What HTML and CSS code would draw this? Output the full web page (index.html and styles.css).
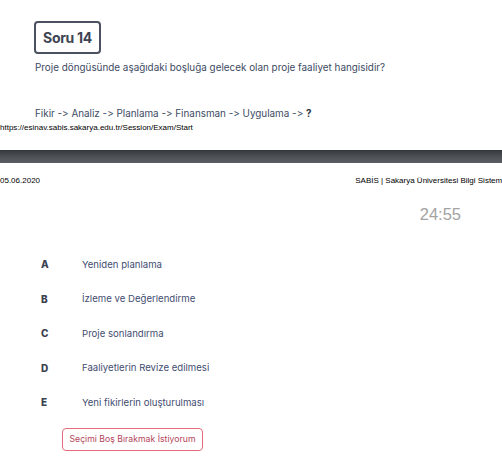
FILE: index.html
```html
<!DOCTYPE html>
<html lang="tr">
<head>
<meta charset="utf-8">
<title>Sınav</title>
<link rel="stylesheet" href="styles.css">
</head>
<body>
<section class="question">
  <div class="badge">Soru 14</div>
  <p class="q-text">Proje döngüsünde aşağıdaki boşluğa gelecek olan proje faaliyet hangisidir?</p>
  <p class="q-flow">Fikir -&gt; Analiz -&gt; Planlama -&gt; Finansman -&gt; Uygulama -&gt; <b>?</b></p>
</section>
<div class="print-url">https://esinav.sabis.sakarya.edu.tr/Session/Exam/Start</div>
<div class="bar"></div>
<div class="print-head">
  <span>05.06.2020</span>
  <span class="site">SABİS | Sakarya Üniversitesi Bilgi Sistemi</span>
</div>
<div class="timer-row"><span class="timer">24:55</span></div>
<ul class="options">
  <li class="option"><span class="letter">A</span><span class="answer">Yeniden planlama</span></li>
  <li class="option"><span class="letter">B</span><span class="answer">İzleme ve Değerlendirme</span></li>
  <li class="option"><span class="letter">C</span><span class="answer">Proje sonlandırma</span></li>
  <li class="option"><span class="letter">D</span><span class="answer">Faaliyetlerin Revize edilmesi</span></li>
  <li class="option"><span class="letter">E</span><span class="answer">Yeni fikirlerin oluşturulması</span></li>
</ul>
<div class="actions"><button class="skip">Seçimi Boş Bırakmak İstiyorum</button></div>
</body>
</html>
```
FILE: styles.css
```css
* { box-sizing: border-box; }
html, body { margin: 0; padding: 0; background: #fff; overflow: hidden; }
body {
  width: 502px; height: 458px;
  font-family: Inter, "Noto Sans", sans-serif;
  font-variant-ligatures: none; font-feature-settings: "calt" 0, "liga" 0;
}

.question { padding: 21px 0 0 34px; }
.badge {
  display: inline-flex; align-items: center; justify-content: center;
  width: 67px; height: 33px;
  border: 2px solid #4b5160; border-radius: 4px;
  font-size: 14px; font-weight: 700; color: #3d4454; letter-spacing: -0.3px;
}
.q-text { margin: 6px 0 0 1px; font-size: 9.9px; line-height: 14px; color: #3d4a63; }
.q-flow { margin: 32px 0 0 1px; font-size: 9.9px; line-height: 14px; color: #3d4a63; }
.q-flow b { color: #2e3440; }

.print-url { margin-top: 3px; font-family: "Liberation Sans", Arial, sans-serif; font-size: 8px; line-height: 10px; color: #000; }
.bar { margin-top: 17px; height: 13px; background: linear-gradient(#34373c, #4f5257 55%, #5a5d61); }
.print-head {
  display: flex; justify-content: space-between; width: 504px;
  margin-top: 13px;
  font-family: "Liberation Sans", Arial, sans-serif; font-size: 8px; line-height: 10px; color: #000;
  white-space: nowrap;
}
.timer-row { display: flex; justify-content: flex-end; padding-right: 41px; margin-top: 18px; }
.timer { font-family: "Liberation Sans", Arial, sans-serif; font-size: 16.5px; line-height: 20px; color: #a3a3a3; }

.options { list-style: none; margin: 33px 0 0; padding: 0 0 0 41px; display: flex; flex-direction: column; gap: 20.5px; }
.option { display: flex; align-items: center; height: 14px; }
.letter { width: 41px; font-size: 10px; font-weight: 800; color: #3a4150; }
.answer { font-size: 9.6px; color: #3f4d70; }

.actions { padding-left: 62px; margin-top: 17px; }
.skip {
  width: 141px; height: 23px; padding: 0;
  background: #fff; border: 1px solid #e66d7e; border-radius: 4px;
  font-family: Inter, "Noto Sans", sans-serif; font-size: 8.7px; color: #b4475a;
}
```
